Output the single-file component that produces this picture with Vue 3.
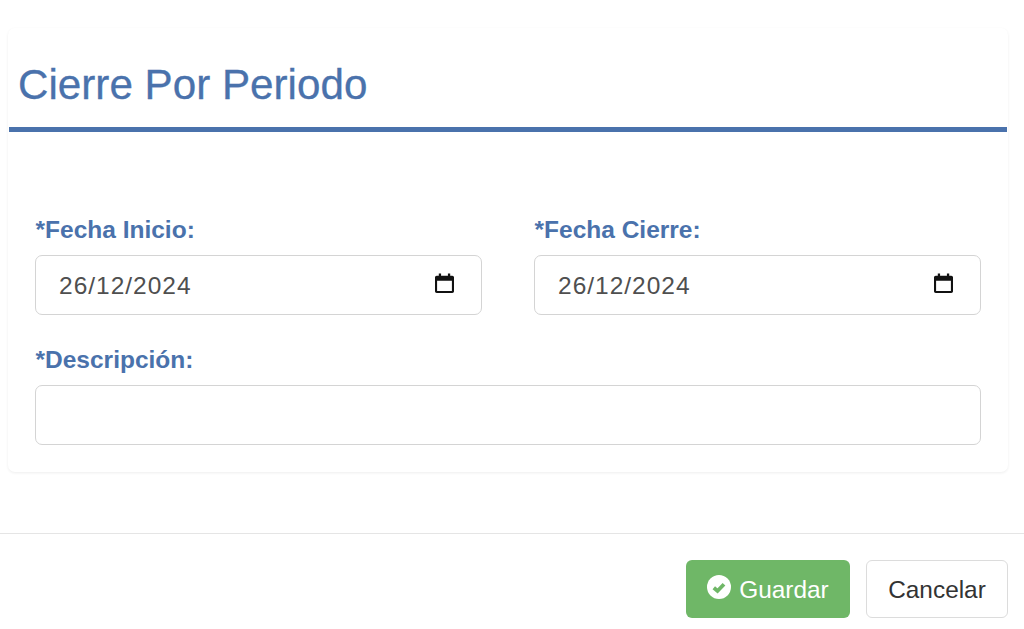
<script setup>
import { ref } from "vue";

const fechaInicio = ref("26/12/2024");
const fechaCierre = ref("26/12/2024");
const descripcion = ref("");
</script>

<template>
    <div class="modal">
        <div class="card">
            <div class="card-header">
                <h1 class="title">Cierre Por Periodo</h1>
            </div>

            <form class="form" @submit.prevent>
                <div class="row">
                    <div class="field">
                        <label class="label">*Fecha Inicio:</label>
                        <div class="date-input">
                            <input v-model="fechaInicio" class="input date-text" type="text" />
                            <svg class="calendar" viewBox="0 0 20 22" preserveAspectRatio="none" aria-hidden="true">
                                <path d="M4 0.5h2.4V3h7.2V0.5H16V3h2.2C19.2 3 20 3.8 20 4.8v15.4c0 1-.8 1.8-1.8 1.8H1.8C.8 22 0 21.2 0 20.2V4.8C0 3.8.8 3 1.8 3H4V0.5zM2.2 8.4v11.4h15.6V8.4H2.2z" />
                            </svg>
                        </div>
                    </div>
                    <div class="field">
                        <label class="label">*Fecha Cierre:</label>
                        <div class="date-input">
                            <input v-model="fechaCierre" class="input date-text" type="text" />
                            <svg class="calendar" viewBox="0 0 20 22" preserveAspectRatio="none" aria-hidden="true">
                                <path d="M4 0.5h2.4V3h7.2V0.5H16V3h2.2C19.2 3 20 3.8 20 4.8v15.4c0 1-.8 1.8-1.8 1.8H1.8C.8 22 0 21.2 0 20.2V4.8C0 3.8.8 3 1.8 3H4V0.5zM2.2 8.4v11.4h15.6V8.4H2.2z" />
                            </svg>
                        </div>
                    </div>
                </div>

                <div class="field">
                    <label class="label">*Descripción:</label>
                    <input v-model="descripcion" class="input" type="text" />
                </div>
            </form>
        </div>

        <div class="footer">
            <button class="btn btn-save" type="button">
                <svg class="check" viewBox="0 0 24 24" aria-hidden="true">
                    <circle cx="12" cy="12" r="12" fill="#fff" />
                    <path d="M6.8 12.8l3.7 3.2 6.5-6.8" fill="none" stroke="#6fb767" stroke-width="3.8" />
                </svg>
                <span>Guardar</span>
            </button>
            <button class="btn btn-cancel" type="button">Cancelar</button>
        </div>
    </div>
</template>

<style>
html,
body {
    margin: 0;
    background: #fff;
}
</style>

<style scoped>
.modal {
    width: 1024px;
    height: 629px;
    padding-top: 28px;
    box-sizing: border-box;
    overflow: hidden;
    font-family: "Liberation Sans", Arial, sans-serif;
}

.card {
    width: 1000px;
    height: 444px;
    margin-left: 8px;
    box-sizing: border-box;
    border-radius: 7px;
    background: #fff;
    box-shadow: 0 1px 3px rgba(0, 0, 0, 0.07);
}

.card-header {
    height: 104px;
    box-sizing: border-box;
    margin-left: 1px;
    margin-right: 1px;
    padding: 31px 0 0 9px;
    border-bottom: 5px solid #4a72ac;
}

.title {
    margin: 0;
    font-size: 42.2px;
    line-height: 52px;
    font-weight: 400;
    color: #4a72ac;
    -webkit-text-stroke: 0.3px #4a72ac;
}

.form {
    display: flex;
    flex-direction: column;
    gap: 31px;
    padding: 84px 27px 0;
}

.row {
    display: grid;
    grid-template-columns: 447px 447px;
    column-gap: 52px;
}

.field {
    display: flex;
    flex-direction: column;
    gap: 11px;
}

.label {
    padding-left: 0.5px;
    font-size: 24.5px;
    line-height: 28px;
    font-weight: 700;
    color: #4a72ac;
}

.input {
    width: 100%;
    height: 60px;
    box-sizing: border-box;
    padding: 1px 23px 0;
    border: 1.5px solid #d4d4d4;
    border-radius: 7px;
    outline: none;
    background: #fff;
    font-family: inherit;
    font-size: 24px;
    color: #4f4f4f;
}

.date-input {
    position: relative;
}

.date-text {
    font-size: 24.5px;
    letter-spacing: 1px;
}

.calendar {
    position: absolute;
    top: 18px;
    right: 28px;
    width: 19px;
    height: 20px;
    fill: #111;
}

.footer {
    display: flex;
    justify-content: flex-end;
    gap: 16px;
    height: 96px;
    margin-top: 61px;
    padding: 26px 16px 0 0;
    box-sizing: border-box;
    border-top: 1px solid #e5e5e5;
}

.btn {
    height: 58px;
    box-sizing: border-box;
    padding: 2px 0 0;
    border-radius: 6px;
    font-family: inherit;
    font-size: 24.4px;
    cursor: pointer;
}

.btn-save {
    display: flex;
    align-items: center;
    justify-content: center;
    gap: 8px;
    width: 164px;
    border: none;
    background: #6fb767;
    color: #fff;
}

.check {
    width: 24px;
    height: 24px;
    margin-top: -7px;
}

.btn-cancel {
    width: 142px;
    border: 1.5px solid #dcdcdc;
    background: #fff;
    color: #333;
}
</style>
